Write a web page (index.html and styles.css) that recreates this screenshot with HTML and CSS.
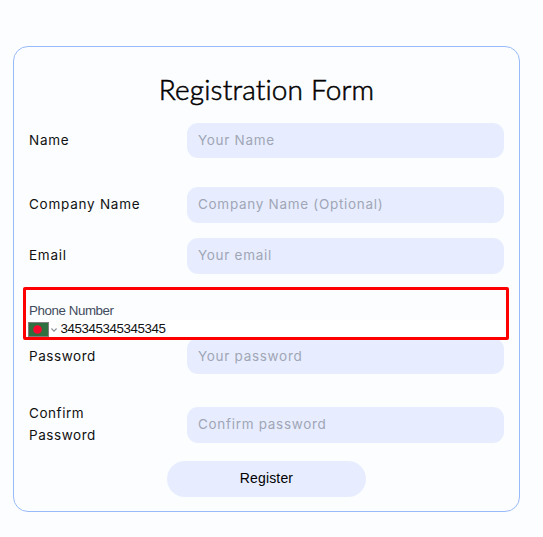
FILE: index.html
```html
<!DOCTYPE html>
<html lang="en">
<head>
<meta charset="utf-8">
<title>Registration Form</title>
<link rel="stylesheet" href="styles.css">
</head>
<body>
<form class="card">
  <h1 class="title">Registration Form</h1>
  <div class="row row-name">
    <label class="label" for="name">Name</label>
    <input class="field" id="name" type="text" placeholder="Your Name">
  </div>
  <div class="row row-company">
    <label class="label" for="company">Company Name</label>
    <input class="field" id="company" type="text" placeholder="Company Name (Optional)">
  </div>
  <div class="row row-email">
    <label class="label" for="email">Email</label>
    <input class="field" id="email" type="email" placeholder="Your email">
  </div>
  <div class="phone">
    <label class="phone-label" for="phone">Phone Number</label>
    <div class="phone-line">
      <svg class="flag" width="21" height="15" viewBox="0 0 21 15">
        <rect x=".5" y=".5" width="20" height="14" fill="#2f6f40" stroke="#7f7f80"/>
        <circle cx="9.5" cy="7.5" r="4.3" fill="#f7092d"/>
      </svg>
      <svg class="chevron" width="6" height="4" viewBox="0 0 6 4">
        <path d="M.4.5 3 3.1 5.6.5" fill="none" stroke="#8d9198" stroke-width="1.2"/>
      </svg>
      <input class="phone-input" id="phone" type="tel" value="345345345345345">
    </div>
    <div class="highlight"></div>
  </div>
  <div class="row row-password">
    <label class="label label-narrow" for="password">Password</label>
    <input class="field" id="password" type="password" placeholder="Your password">
  </div>
  <div class="row row-confirm">
    <label class="label label-narrow" for="confirm">Confirm<br>Password</label>
    <input class="field" id="confirm" type="password" placeholder="Confirm password">
  </div>
  <button class="submit" type="button">Register</button>
</form>
</body>
</html>
```
FILE: styles.css
```css
* { box-sizing: border-box; }
body {
  margin: 0;
  background: #fcfdff;
  color: #111;
  font-family: Inter, sans-serif;
}
.card {
  width: 507px;
  height: 466px;
  margin: 46px 0 0 13px;
  padding: 24px 15px 0;
  border: 1px solid #98bafa;
  border-radius: 15px;
}
.title {
  margin: 0;
  height: 52px;
  font: 300 28px/36px Lato, sans-serif;
  font-variant-ligatures: none;
  letter-spacing: .15px;
  -webkit-text-stroke: .55px #000;
  text-align: center;
  white-space: nowrap;
  color: #000;
}
.row {
  display: grid;
  grid-template-columns: 158px 317px;
  grid-template-rows: 100%;
  align-items: center;
  height: 36px;
}
.row-name { height: 35px; margin-bottom: 29px; }
.row-company { margin-bottom: 15px; }
.label {
  padding-bottom: 2px;
  font-size: 13.5px;
  line-height: 22px;
  letter-spacing: .75px;
}
.label-narrow { letter-spacing: .55px; }
.row-password .label { padding-bottom: 0; }
.field {
  width: 317px;
  height: 100%;
  padding: 0 11px 2px;
  border: 0;
  border-radius: 11px;
  background: #e7edff;
  font: 400 13.5px Inter, sans-serif;
  letter-spacing: .7px;
}
.row-password .field { padding-bottom: 0; }
.field::placeholder { color: #a0a6b5; opacity: 1; }
.phone {
  position: relative;
  height: 64px;
  padding-top: 27px;
  font-family: "Liberation Sans", sans-serif;
}
.phone-label {
  display: block;
  height: 19px;
  font-size: 13.33px;
  line-height: 19px;
  letter-spacing: -.42px;
  color: #424b5c;
}
.phone-line {
  display: flex;
  align-items: center;
  height: 18px;
  margin-left: -1px;
  background: #fff;
}
.chevron { margin: 1px 3.5px 0 2px; }
.phone-input {
  flex: 1;
  min-width: 0;
  height: 16px;
  padding: 0 0 2px;
  border: 0;
  background: none;
  font: 13.33px "Liberation Sans", sans-serif;
  letter-spacing: -.42px;
  color: #111;
}
.highlight {
  position: absolute;
  left: -6px;
  top: 13px;
  width: 486px;
  height: 53px;
  border: 3px solid #f00;
  border-radius: 2px;
}
.row-confirm { margin: 33px 0 18px; }
.submit {
  display: block;
  width: 199px;
  height: 36px;
  margin: 0 0 0 138px;
  padding: 0 0 2px;
  border: 0;
  border-radius: 18px;
  background: #e7edff;
  font: 14px "Liberation Sans", sans-serif;
  letter-spacing: .15px;
  color: #000;
}
```
